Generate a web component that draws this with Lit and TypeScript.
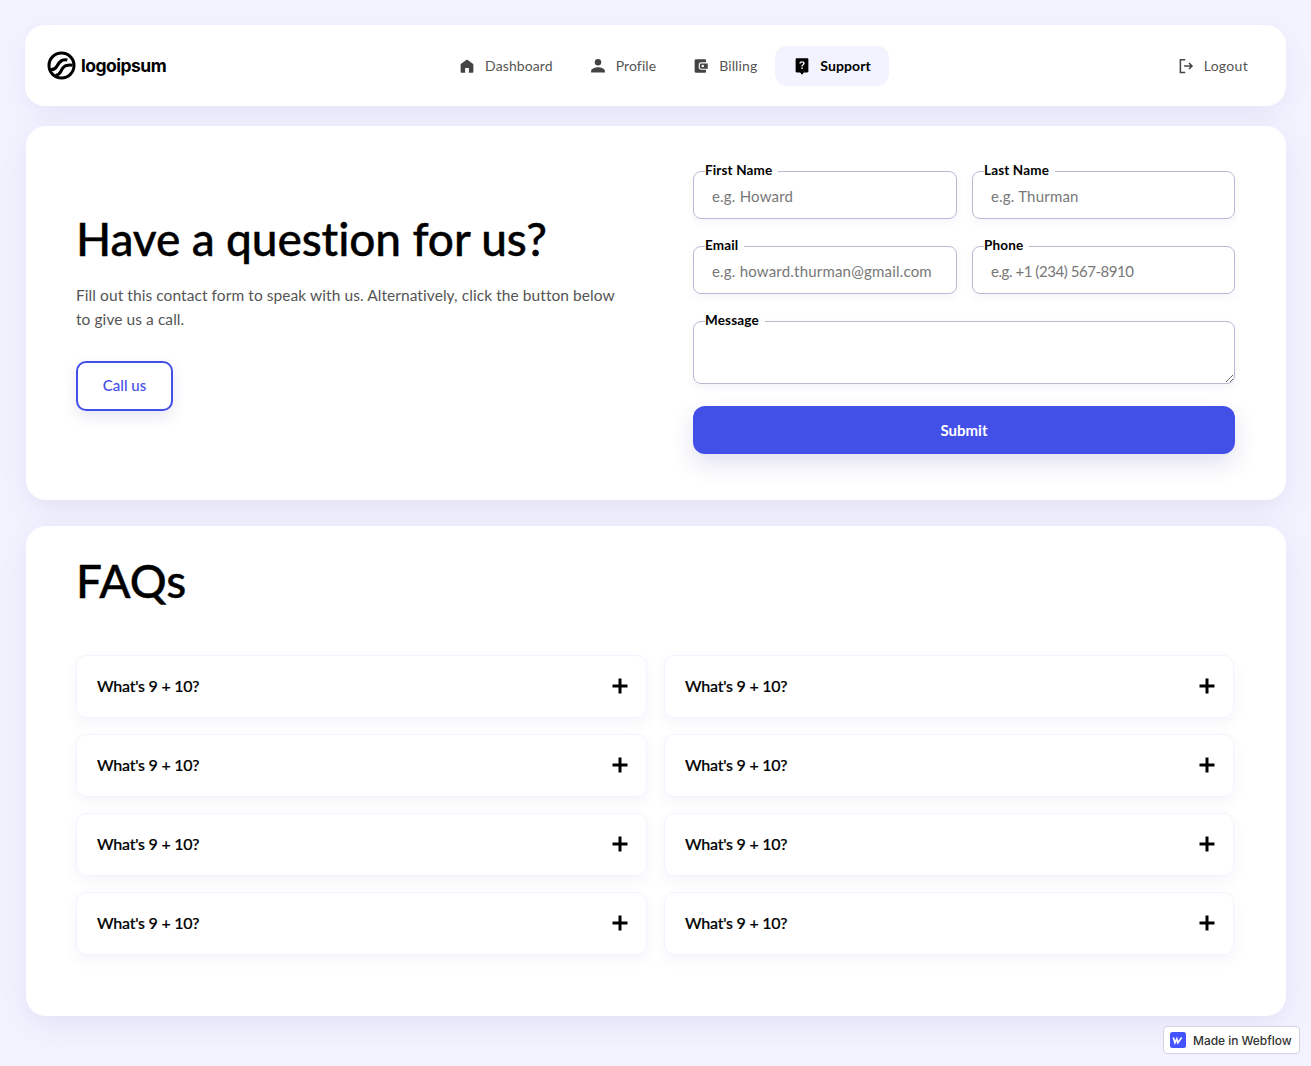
import { LitElement, html, css, svg } from "lit";
import { customElement } from "lit/decorators.js";

const FONT = css`Lato, "Noto Sans", sans-serif`;

const ICONS = {
  home: svg`<path d="M12 3.200 4.200 9.100c-.5.4-.7.9-.7 1.500V20c0 .6.400 1 1 1H9.500v-6.500h5V21h5c.6 0 1-.4 1-1v-9.400c0-.6-.3-1.100-.7-1.500z"/>`,
  user: svg`<circle cx="12" cy="7" r="4.300"/><path d="M2.800 20.500v-1.800c0-3.400 6-5 9.200-5s9.200 1.600 9.200 5v1.800z"/>`,
  wallet: svg`<path fill-rule="evenodd" d="M5.500 3h11.500c1 0 1.700.7 1.700 1.700V7H12c-1.700 0-3 1.300-3 3v4c0 1.700 1.300 3 3 3h6.700v2.300c0 1-.7 1.700-1.700 1.700H5.500c-1.100 0-2-.9-2-2V5c0-1.100.9-2 2-2zM12 8.500h9v7h-9c-.8 0-1.500-.7-1.500-1.500v-4c0-.8.7-1.500 1.500-1.500zm2.300 1.800a1.700 1.700 0 1 0 0 3.400 1.700 1.700 0 0 0 0-3.400z"/>`,
  help: svg`<path fill-rule="evenodd" d="M5 1.500h14c.9 0 1.500.6 1.500 1.500v16c0 .9-.6 1.500-1.500 1.500h-4.500L12 23.500l-2.500-3H5c-.9 0-1.500-.6-1.500-1.500V3c0-.9.6-1.500 1.500-1.500zM12 5.500c-2 0-3.500 1.200-3.600 3h2c.1-.7.7-1.200 1.600-1.200s1.500.5 1.500 1.200c0 1.400-2.500 1.400-2.500 4.200h2c0-1.900 2.600-2.100 2.600-4.300 0-1.800-1.500-2.900-3.600-2.900zM11 14v2h2v-2z"/>`,
};

const FAQS = Array.from({ length: 8 }, () => "What's 9 + 10?");

@customElement("app-root")
export class AppRoot extends LitElement {
  static styles = css`
    :host { display: block; min-height: 1066px; box-sizing: border-box; padding: 25px 25px 50px; background: #f3f3ff; font-family: ${FONT}; color: #000; position: relative; }
    * { box-sizing: border-box; }
    .card { background: #fff; border-radius: 20px; box-shadow: 0 8px 24px rgba(70, 70, 160, 0.08); }
    nav { height: 81px; padding: 0 20px 0 22px; display: flex; justify-content: space-between; align-items: center; }
    .logo { display: flex; align-items: center; gap: 5px; font-family: Inter, sans-serif; font-weight: 700; font-size: 17.500px; letter-spacing: -0.5px; }
    .links { display: flex; align-items: center; margin-left: 4px; }
    .link { height: 40px; display: flex; align-items: center; gap: 9px; padding: 0 18px; border-radius: 12px; font-size: 14px; color: #555; letter-spacing: 0.1px; }
    .link svg { width: 18px; height: 18px; fill: #444; flex: none; }
    .link.active { background: #f3f3ff; color: #000; font-weight: 700; }
    .link.active svg { fill: #000; }
    .logout { padding: 0 18px; display: flex; align-items: center; gap: 9px; font-size: 14px; color: #555; letter-spacing: 0.3px; }
    .logout svg { width: 18px; height: 18px; fill: none; stroke: #444; stroke-width: 2; }

    .hero { margin: 20px 0.500px 0; height: 374px; padding: 36px 50.500px 0; display: grid; grid-template-columns: 1fr 542px; gap: 60px; box-shadow: 0 8px 30px rgba(70, 70, 160, 0.1); }
    .intro { display: flex; flex-direction: column; align-items: flex-start; justify-content: center; padding-top: 7px; height: 292px; }
    h1 { margin: 0; font-size: 46px; font-weight: 500; line-height: 54px; letter-spacing: -0.1px; -webkit-text-stroke: 0.4px #000; }
    .intro p { margin: 17px 0 30px; max-width: 545px; font-size: 15.500px; line-height: 24px; color: #555; letter-spacing: 0.07px; }
    .call { width: 97px; height: 50px; flex: none; border: 2px solid #4350e8; border-radius: 10px; background: #fff; color: #4350e8; font: 500 15px ${FONT}; box-shadow: 0 6px 14px rgba(70, 70, 160, 0.13); padding: 0 0 2px; }

    form { display: grid; grid-template-columns: 264px 263px; column-gap: 15px; align-content: start; }
    fieldset { margin: 0 0 18px; padding: 0 11px; min-width: 0; border: 1px solid #b8bad6; border-radius: 8px; height: 57px; box-shadow: 0 3px 8px rgba(70, 70, 160, 0.06); }
    fieldset.wide { grid-column: 1 / -1; height: 72px; margin-bottom: 22px; padding-right: 0; }
    legend { padding: 0 6px 2px 0; font-size: 13.500px; font-weight: 700; line-height: 17px; letter-spacing: 0.15px; color: #000; }
    input, textarea { display: block; width: 100%; border: 0; outline: 0; background: transparent; font: 400 15px ${FONT}; color: #333; padding: 0 7px; letter-spacing: 0.2px; }
    input { height: 30px; }
    input.phone { letter-spacing: -0.44px; }
    input::placeholder { color: #777; opacity: 1; }
    textarea { height: 52px; resize: vertical; border-radius: 0 0 8px 0; }
    .submit { grid-column: 1 / -1; height: 48px; border: 0; border-radius: 12px; background: #4350e8; color: #fff; font: 700 15px ${FONT}; box-shadow: 0 10px 22px rgba(70, 70, 160, 0.16); }

    .faq { margin: 26px 0.500px 0; height: 490px; padding: 27px 50.500px 0; box-shadow: 0 8px 30px rgba(70, 70, 160, 0.1); }
    h2 { margin: 0 0 46px; font-size: 46px; font-weight: 500; line-height: 56px; -webkit-text-stroke: 0.4px #000; }
    .grid { display: grid; grid-template-columns: 571px 570px; column-gap: 17px; row-gap: 16.500px; }
    .item { height: 62.500px; padding: 0 17.500px 0 20px; display: flex; align-items: center; justify-content: space-between; border: 1px solid #f3f3ff; border-radius: 10px; box-shadow: 0 6px 14px rgba(70, 70, 160, 0.05); font-size: 16px; font-weight: 500; letter-spacing: -0.25px; }
    .item span { margin-top: -2px; -webkit-text-stroke: 0.2px #000; }
    .item svg { width: 18px; height: 18px; stroke: #000; stroke-width: 3; fill: none; }

    .badge { position: absolute; right: 11px; top: 1026px; width: 137px; height: 28px; display: flex; align-items: center; gap: 7px; padding: 0 6px; background: #fff; border: 1px solid #d3d3e0; border-radius: 4px; font: 500 12px Inter, sans-serif; letter-spacing: -0.05px; color: #333; }
    .badge svg { width: 16px; height: 16px; flex: none; }
  `;

  private navIcon(name: keyof typeof ICONS) {
    return html`<svg viewBox="0 0 24 24">${ICONS[name]}</svg>`;
  }

  render() {
    return html`
      <nav class="card">
        <div class="logo">
          <svg width="29" height="29" viewBox="0 0 29 29" fill="none" stroke="#000" stroke-width="3">
            <circle cx="14.500" cy="14.500" r="12.500"/>
            <path d="M3.500 18.500c3 .5 5-.6 6.500-3.500 1.600-3 3-5 5.500-5.800 2-.7 3.500-.6 4.800-.2M8.500 24.500c2.500-.4 4.300-1.700 5.500-4.300 1.300-3 3-5 5.500-5.700 2-.6 4-.6 6-.2"/>
          </svg>
          logoipsum
        </div>
        <div class="links">
          <a class="link">${this.navIcon("home")}Dashboard</a>
          <a class="link">${this.navIcon("user")}Profile</a>
          <a class="link">${this.navIcon("wallet")}Billing</a>
          <a class="link active">${this.navIcon("help")}Support</a>
        </div>
        <a class="logout">
          <svg viewBox="0 0 24 24"><path d="M11 3.500H4.500v17H11M9.500 12H20M16 8l4 4-4 4"/></svg>
          Logout
        </a>
      </nav>

      <section class="card hero">
        <div class="intro">
          <h1>Have a question for us?</h1>
          <p>Fill out this contact form to speak with us. Alternatively, click the button below to give us a call.</p>
          <button class="call">Call us</button>
        </div>
        <form>
          <fieldset><legend>First Name</legend><input placeholder="e.g. Howard" /></fieldset>
          <fieldset><legend>Last Name</legend><input placeholder="e.g. Thurman" /></fieldset>
          <fieldset><legend>Email</legend><input placeholder="e.g. howard.thurman@gmail.com" /></fieldset>
          <fieldset><legend>Phone</legend><input class="phone" placeholder="e.g. +1 (234) 567-8910" /></fieldset>
          <fieldset class="wide"><legend>Message</legend><textarea></textarea></fieldset>
          <button class="submit" type="button">Submit</button>
        </form>
      </section>

      <section class="card faq">
        <h2>FAQs</h2>
        <div class="grid">
          ${FAQS.map(
            (q) => html`<div class="item"><span>${q}</span><svg viewBox="0 0 18 18"><path d="M9 1.500v15M1.500 9h15"/></svg></div>`
          )}
        </div>
      </section>

      <a class="badge">
        <svg viewBox="0 0 16 16"><rect width="16" height="16" rx="2.500" fill="#4353ff"/><path d="M3.300 5.500l1.600 5.300 1.900-3.900 1 3.900 3.900-5.300" fill="none" stroke="#fff" stroke-width="1.700"/></svg>
        Made in Webflow
      </a>
    `;
  }
}
